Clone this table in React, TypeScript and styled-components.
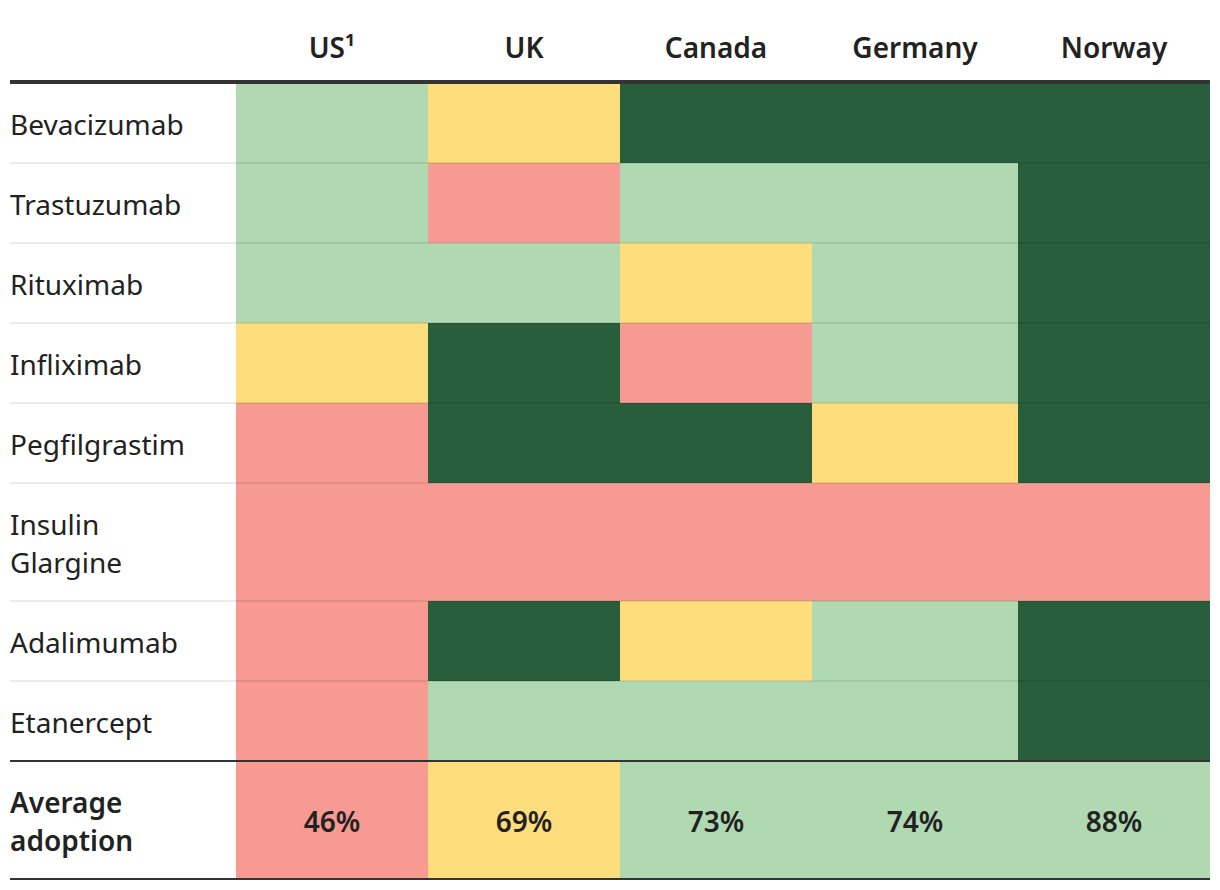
import React from 'react';
import styled, { createGlobalStyle } from 'styled-components';

const GlobalStyle = createGlobalStyle`
  html, body {
    margin: 0;
    padding: 0;
    background: #fff;
  }
  body {
    font-family: "Noto Sans", "Open Sans", sans-serif;
    color: #222;
  }
`;

type Level = 'high' | 'good' | 'mid' | 'low';

const fills: Record<Level, string> = {
  high: '#285e3b',
  good: '#b0d9b1',
  mid: '#fedd7c',
  low: '#f69a92',
};

const Page = styled.div`
  padding: 0 10px;
`;

const Table = styled.table`
  width: 1200px;
  border-collapse: collapse;
  table-layout: fixed;
  font-size: 28px;
  line-height: 38px;
`;

const HeadCell = styled.th`
  padding: 28px 0 14px;
  font-weight: 600;
  text-align: center;
  color: #222;
  border-bottom: 4px solid #333;
`;

const LabelCell = styled.td<{ $strong?: boolean; $last?: boolean }>`
  padding: 21px 0 19px;
  text-align: left;
  font-weight: ${p => (p.$strong ? 600 : 400)};
  color: #222;
  border-bottom: 2px solid ${p => (p.$last ? '#333' : 'rgba(0,0,0,0.08)')};
`;

const ValueCell = styled.td<{ $level: Level; $last?: boolean; $shown?: boolean }>`
  padding: 21px 0 19px;
  text-align: center;
  font-weight: 600;
  background: ${p => fills[p.$level]};
  color: ${p => (p.$shown ? '#222' : 'rgba(0,0,0,0.012)')};
  border-bottom: 2px solid ${p => (p.$last ? '#333' : 'rgba(0,0,0,0.08)')};
`;

const countries = ['US¹', 'UK', 'Canada', 'Germany', 'Norway'];
const widths = [226, 192, 192, 192, 206, 192];

type Row = { name: string; cells: [Level, number][] };

const rows: Row[] = [
  { name: 'Bevacizumab', cells: [['good', 62], ['mid', 48], ['high', 94], ['high', 91], ['high', 97]] },
  { name: 'Trastuzumab', cells: [['good', 71], ['low', 22], ['good', 68], ['good', 73], ['high', 99]] },
  { name: 'Rituximab', cells: [['good', 66], ['good', 75], ['mid', 45], ['good', 70], ['high', 98]] },
  { name: 'Infliximab', cells: [['mid', 41], ['high', 92], ['low', 18], ['good', 64], ['high', 100]] },
  { name: 'Pegfilgrastim', cells: [['low', 27], ['high', 93], ['high', 90], ['mid', 52], ['high', 100]] },
  { name: 'Insulin Glargine', cells: [['low', 6], ['low', 9], ['low', 12], ['low', 15], ['low', 20]] },
  { name: 'Adalimumab', cells: [['low', 0], ['high', 88], ['mid', 47], ['good', 65], ['high', 95]] },
  { name: 'Etanercept', cells: [['low', 5], ['good', 72], ['good', 76], ['good', 79], ['high', 96]] },
];

const averages: [Level, string][] = [
  ['low', '46%'],
  ['mid', '69%'],
  ['good', '73%'],
  ['good', '74%'],
  ['good', '88%'],
];

const LabelText = styled.span`
  display: block;
  max-width: 150px;
`;

export default function App() {
  return (
    <Page>
      <GlobalStyle />
      <Table>
        <colgroup>
          {widths.map((w, i) => (
            <col key={i} style={{ width: w }} />
          ))}
        </colgroup>
        <thead>
          <tr>
            <HeadCell />
            {countries.map(c => (
              <HeadCell key={c}>{c}</HeadCell>
            ))}
          </tr>
        </thead>
        <tbody>
          {rows.map((r, ri) => {
            const last = ri === rows.length - 1;
            return (
              <tr key={r.name}>
                <LabelCell $last={last}>
                  <LabelText>{r.name}</LabelText>
                </LabelCell>
                {r.cells.map(([lvl, v], ci) => (
                  <ValueCell key={ci} $level={lvl} $last={last}>
                    {v}%
                  </ValueCell>
                ))}
              </tr>
            );
          })}
          <tr>
            <LabelCell $strong $last>
              <LabelText>Average adoption</LabelText>
            </LabelCell>
            {averages.map(([lvl, v], ci) => (
              <ValueCell key={ci} $level={lvl} $last $shown>
                {v}
              </ValueCell>
            ))}
          </tr>
        </tbody>
      </Table>
    </Page>
  );
}
